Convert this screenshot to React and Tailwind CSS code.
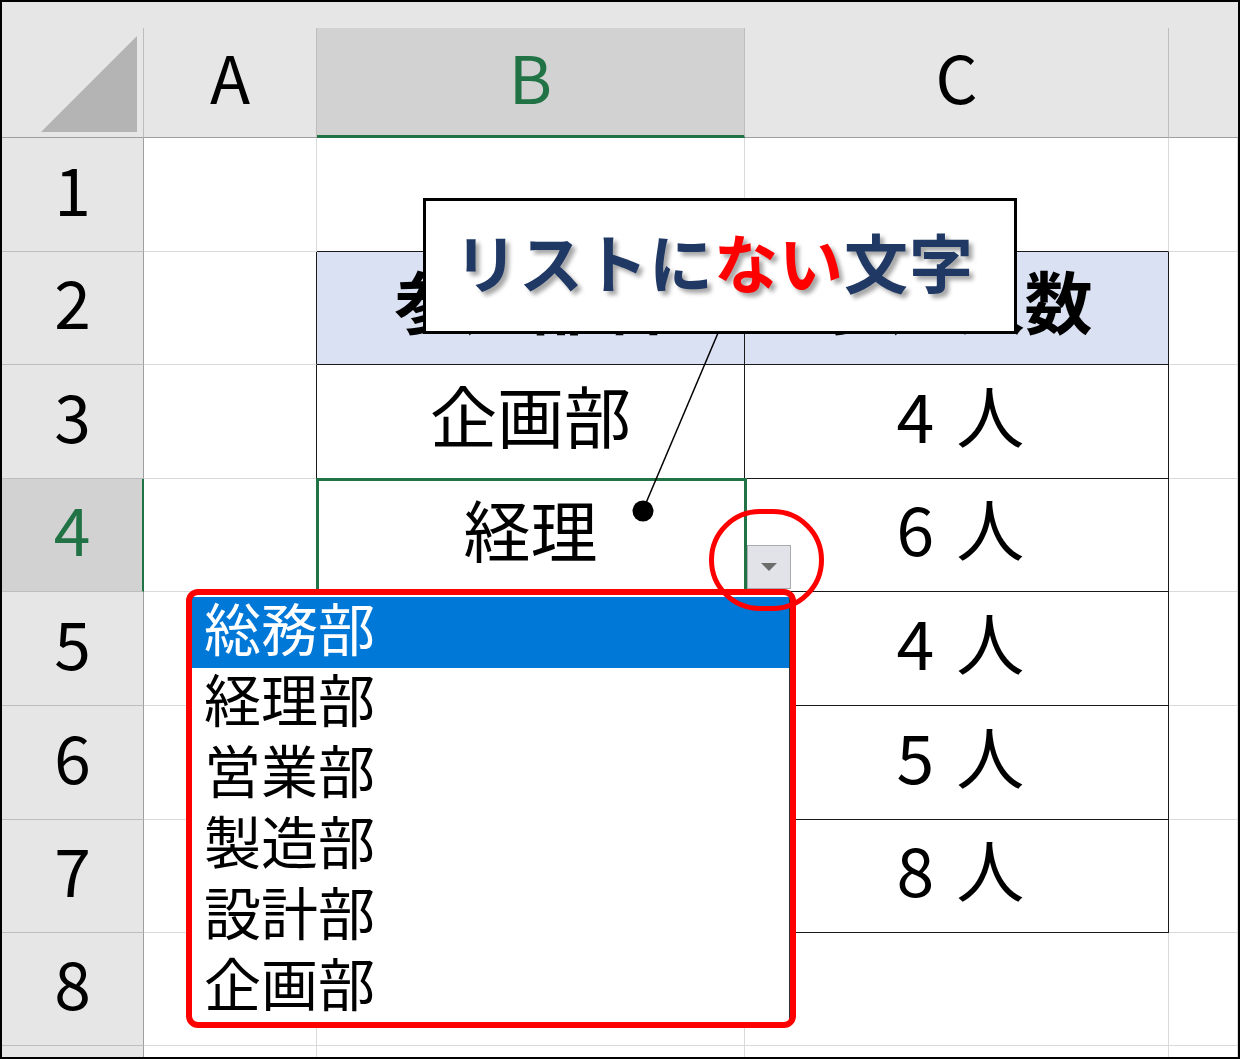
import React from "react";

const JP = "font-['Noto_Sans_CJK_JP','Noto_Sans',sans-serif]";
const rowHeights = [114, 113, 114, 113, 114, 114, 113, 113, 11];
const colWidths = ["w-[173px]", "w-[428px]", "w-[424px]", "flex-1"];

const content = {
  "2-2": { t: "参加部署", b: true },
  "2-3": { t: "参加人数", b: true },
  "3-2": { t: "企画部" },
  "3-3": { n: "4" },
  "4-2": { t: "経理" },
  "4-3": { n: "6" },
  "5-3": { n: "4" },
  "6-3": { n: "5" },
  "7-3": { n: "8" },
};

const inTable = (r, c) => r >= 2 && r <= 7 && (c === 2 || c === 3);

function Cell({ r, c }) {
  const rb = inTable(r, c) || inTable(r, c + 1);
  const bb = inTable(r, c) || inTable(r + 1, c);
  const bg = r === 2 && inTable(r, c) ? "bg-[#d9e1f2]" : "bg-white";
  const data = content[`${r}-${c}`];
  return (
    <div
      className={`${colWidths[c - 1]} h-full border-r border-b ${rb ? "border-r-[#1a1a1a]" : "border-r-[#dadada]"} ${bb ? "border-b-[#1a1a1a]" : "border-b-[#dadada]"} ${bg} flex items-center justify-center pb-[16px]`}
    >
      {data && data.t && (
        <span
          className={`${JP} ${data.b ? "text-[68px] font-bold" : "text-[67px] font-normal"} leading-none text-black whitespace-nowrap`}
        >
          {data.t}
        </span>
      )}
      {data && data.n && (
        <span className={`${JP} text-[68px] leading-none text-black whitespace-nowrap flex gap-[22px] pl-[8px]`}>
          <span>{data.n}</span>
          <span>人</span>
        </span>
      )}
    </div>
  );
}

function RowHeader({ r, h }) {
  const sel = r === 4;
  return (
    <div
      className={`w-[142px] shrink-0 h-full border-b border-b-[#bdbdbd] ${sel ? "bg-[#d2d2d2] border-r-2 border-r-[#217346]" : "bg-[#e6e6e6] border-r border-r-[#9f9f9f]"} flex items-center justify-center pb-[16px]`}
    >
      {h > 20 && (
        <span
          className={`${JP} text-[66px] leading-none ${sel ? "text-[#217346]" : "text-black"}`}
        >
          {r}
        </span>
      )}
    </div>
  );
}

export default function App() {
  return (
    <div className="relative w-[1240px] h-[1059px] border-2 border-black bg-[#e6e6e6] overflow-hidden">
      {/* top band */}
      <div className="h-[26px] bg-[#e6e6e6]" />
      {/* column header */}
      <div className="flex h-[110px]">
        <div className="w-[142px] shrink-0 h-full border-r border-r-[#bdbdbd] border-b border-b-[#9f9f9f] bg-[#e6e6e6] flex items-end justify-end pr-[6px] pb-[5px]">
          <svg width="96" height="96" viewBox="0 0 96 96">
            <polygon points="96,0 96,96 0,96" fill="#b4b4b4" />
          </svg>
        </div>
        <div className="w-[173px] h-full border-r border-r-[#bdbdbd] border-b border-b-[#9f9f9f] bg-[#e6e6e6] flex items-center justify-center pb-[16px]">
          <span className={`${JP} text-[66px] leading-none text-black`}>A</span>
        </div>
        <div className="w-[428px] h-full border-r border-r-[#bdbdbd] border-b-[3px] border-b-[#217346] bg-[#d2d2d2] flex items-center justify-center pb-[14px]">
          <span className={`${JP} text-[66px] leading-none text-[#217346]`}>B</span>
        </div>
        <div className="w-[424px] h-full border-r border-r-[#bdbdbd] border-b border-b-[#9f9f9f] bg-[#e6e6e6] flex items-center justify-center pb-[16px]">
          <span className={`${JP} text-[66px] leading-none text-black`}>C</span>
        </div>
        <div className="flex-1 h-full border-b border-b-[#9f9f9f] bg-[#e6e6e6]" />
      </div>
      {/* rows */}
      {rowHeights.map((h, i) => {
        const r = i + 1;
        return (
          <div key={r} className="flex" style={{ height: h }}>
            <RowHeader r={r} h={h} />
            {[1, 2, 3, 4].map((c) => (
              <Cell key={c} r={r} c={c} />
            ))}
          </div>
        );
      })}

      {/* selected cell B4 */}
      <div className="absolute left-[314px] top-[476px] w-[431px] h-[116px] border-[3px] border-[#217346] pointer-events-none" />

      {/* callout box */}
      <div className="absolute left-[421px] top-[196px] w-[594px] h-[136px] border-[3px] border-black bg-white flex items-center justify-center pb-[12px] pr-[12px]">
        <span
          className={`${JP} text-[64px] leading-none font-bold tracking-[1px] text-[#203864] [text-shadow:4px_4px_4px_rgba(0,0,0,0.35)] whitespace-nowrap`}
        >
          リストに<span className="text-[#ff0000]">ない</span>文字
        </span>
      </div>

      {/* leader line + dot */}
      <svg className="absolute left-0 top-0 pointer-events-none" width="1240" height="1059">
        <line x1="716" y1="331" x2="641" y2="508" stroke="#000" strokeWidth="1.5" />
        <circle cx="641" cy="509" r="10.5" fill="#000" />
      </svg>

      {/* dropdown button */}
      <div className="absolute left-[745px] top-[543px] w-[44px] h-[44px] bg-[#e1e3e8] border border-[#a9abb0] flex items-center justify-center">
        <svg width="16" height="9" viewBox="0 0 16 9">
          <polygon points="0,0 16,0 8,8" fill="#6d6d6d" />
        </svg>
      </div>

      {/* dropdown list */}
      <div className="absolute left-[189px] top-[592px] w-[599px] h-[432px] bg-white border border-[#333] pt-[2px]">
        {["総務部", "経理部", "営業部", "製造部", "設計部", "企画部"].map((t, i) => (
          <div
            key={t}
            className={`h-[71px] flex items-center pl-[12px] pb-[12px] ${i === 0 ? "bg-[#0078d7] text-white" : "bg-white text-black"}`}
          >
            <span className={`${JP} text-[57px] leading-none`}>{t}</span>
          </div>
        ))}
      </div>

      {/* red frame */}
      <div className="absolute left-[184px] top-[587px] w-[610px] h-[439px] border-[6px] border-[#ff0000] rounded-[12px] pointer-events-none" />

      {/* red circle */}
      <div className="absolute left-[707px] top-[507px] w-[115px] h-[102px] border-[5px] border-[#ff0000] rounded-full pointer-events-none" />
    </div>
  );
}
